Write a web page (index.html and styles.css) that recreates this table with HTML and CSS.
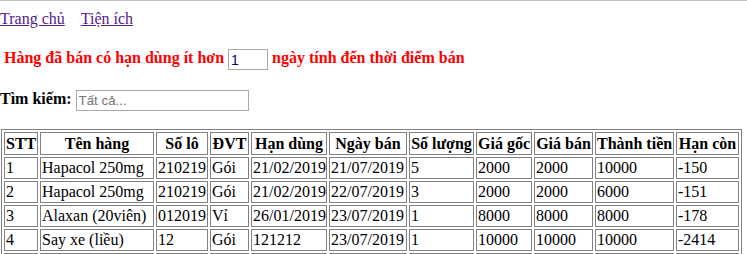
FILE: index.html
```html
<!DOCTYPE html>
<html>
<head>
<meta charset="utf-8">
<link rel="stylesheet" href="styles.css">
</head>
<body>
<div class="topline"></div>
<nav class="nav"><a href="#" class="lnk">Trang chủ</a><a href="#" class="lnk">Tiện ích</a></nav>
<div class="title">Hàng đã bán có hạn dùng ít hơn <input class="days" type="text" value="1"> ngày tính đến thời điểm bán</div>
<div class="search"><b>Tìm kiếm:</b> <input class="q" type="text" placeholder="Tất cả..."></div>
<table class="grid">
<tr><th class="c1">STT</th><th class="c2">Tên hàng</th><th class="c3">Số lô</th><th class="c4">ĐVT</th><th class="c5">Hạn dùng</th><th class="c6">Ngày bán</th><th class="c7">Số lượng</th><th class="c8">Giá gốc</th><th class="c9">Giá bán</th><th class="c10">Thành tiền</th><th class="c11">Hạn còn</th></tr>
<tr><td>1</td><td>Hapacol 250mg</td><td>210219</td><td>Gói</td><td>21/02/2019</td><td>21/07/2019</td><td>5</td><td>2000</td><td>2000</td><td>10000</td><td>-150</td></tr>
<tr><td>2</td><td>Hapacol 250mg</td><td>210219</td><td>Gói</td><td>21/02/2019</td><td>22/07/2019</td><td>3</td><td>2000</td><td>2000</td><td>6000</td><td>-151</td></tr>
<tr><td>3</td><td>Alaxan (20viên)</td><td>012019</td><td>Vỉ</td><td>26/01/2019</td><td>23/07/2019</td><td>1</td><td>8000</td><td>8000</td><td>8000</td><td>-178</td></tr>
<tr><td>4</td><td>Say xe (liều)</td><td>12</td><td>Gói</td><td>121212</td><td>23/07/2019</td><td>1</td><td>10000</td><td>10000</td><td>10000</td><td>-2414</td></tr>
<tr><td>5</td><td>Hapacol 250mg</td><td>210219</td><td>Gói</td><td>21/02/2019</td><td>24/07/2019</td><td>2</td><td>2000</td><td>2000</td><td>4000</td><td>-153</td></tr>
</table>
</body>
</html>
```
FILE: styles.css
```css
html, body { margin: 0; padding: 0; background: #fff; }
body { font-family: "Liberation Serif", "Times New Roman", serif; font-size: 16px; color: #000; }
.topline { height: 1px; background: #c0c0c0; }
.nav { padding-top: 9px; display: flex; gap: 16px; }
.lnk { color: #551a8b; text-decoration: underline; }
.title { color: #ff0000; font-weight: bold; font-size: 16px; padding: 21px 0 0 4px; }
.days { width: 34px; height: 17px; padding: 1px 2px; border: 1px solid #a9a9a9; font-family: "Liberation Sans", Arial, sans-serif; font-size: 14px; color: #000080; vertical-align: middle; }
.search { padding-top: 20px; }
.q { width: 167px; height: 17px; padding: 1px 2px; border: 1px solid #a9a9a9; font-family: "Liberation Sans", Arial, sans-serif; font-size: 13.33px; vertical-align: middle; }
.q::placeholder { color: #757575; }
.grid { margin: 18px 0 0 1px; border: 1px solid #808080; border-spacing: 2px; table-layout: fixed; width: 741px; }
.grid th, .grid td { border: 1px solid #808080; padding: 1px; text-align: left; white-space: nowrap; overflow: hidden; box-sizing: border-box; }
.grid th { text-align: center; height: 23px; }
.c1 { width: 34px; }
.c2 { width: 114px; }
.c3 { width: 52px; }
.c4 { width: 39px; }
.c5 { width: 76px; }
.c6 { width: 78px; }
.c7 { width: 65px; }
.c8 { width: 56px; }
.c9 { width: 59px; }
.c10 { width: 79px; }
.c11 { width: 63px; }
```
